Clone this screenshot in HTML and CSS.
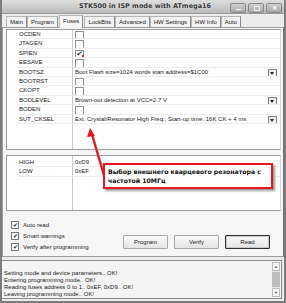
FILE: index.html
```html
<!DOCTYPE html>
<html lang="en">
  <head>
    <meta charset="UTF-8" />
    <title>STK500 in ISP mode with ATmega16</title>
    <link rel="stylesheet" href="styles.css">
  </head>
  <body>
    <div class="window">
      <!-- Title bar -->
      <div class="titlebar">
        <span class="title">STK500 in ISP mode with ATmega16</span>
        <div class="controls">
          <span class="ctl min"></span>
          <span class="ctl max"></span>
          <span class="ctl close">✕</span>
        </div>
      </div>

      <!-- Tabs -->
      <div class="tabs">
        <span class="tab first">Main</span>
        <span class="tab">Program</span>
        <span class="tab active">Fuses</span>
        <span class="tab">LockBits</span>
        <span class="tab">Advanced</span>
        <span class="tab">HW Settings</span>
        <span class="tab">HW Info</span>
        <span class="tab">Auto</span>
      </div>

      <div class="panel">
        <div class="list fuses">
          <div class="row"><span class="name">OCDEN</span><span class="val"><i class="box"></i></span></div>
          <div class="row"><span class="name">JTAGEN</span><span class="val"><i class="box"></i></span></div>
          <div class="row"><span class="name">SPIEN</span><span class="val"><i class="box checked"></i></span></div>
          <div class="row"><span class="name">EESAVE</span><span class="val"><i class="box"></i></span></div>
          <div class="row"><span class="name">BOOTSZ</span><span class="val combo">Boot Flash size=1024 words start address=$1C00<b class="drop"></b></span></div>
          <div class="row"><span class="name">BOOTRST</span><span class="val"><i class="box"></i></span></div>
          <div class="row"><span class="name">CKOPT</span><span class="val"><i class="box"></i></span></div>
          <div class="row"><span class="name">BODLEVEL</span><span class="val combo">Brown-out detection at VCC=2.7 V<b class="drop"></b></span></div>
          <div class="row"><span class="name">BODEN</span><span class="val"><i class="box"></i></span></div>
          <div class="row"><span class="name">SUT_CKSEL</span><span class="val combo">Ext. Crystal/Resonator High Freq.; Start-up time: 16K CK + 4 ms<b class="drop"></b></span></div>
        </div>

        <div class="list bytes">
          <div class="row"><span class="name">HIGH</span><span class="val">0xD9</span></div>
          <div class="row"><span class="name">LOW</span><span class="val">0xEF</span></div>
        </div>

        <div class="options">
          <div class="checks">
            <label class="opt"><i class="tick">✔</i>Auto read</label>
            <label class="opt"><i class="tick">✔</i>Smart warnings</label>
            <label class="opt"><i class="tick">✔</i>Verify after programming</label>
          </div>
          <div class="buttons">
            <button class="btn">Program</button>
            <button class="btn">Verify</button>
            <button class="btn default">Read</button>
          </div>
        </div>
      </div>

      <!-- Log -->
      <div class="log">
        <div class="log-text">
          <div>Setting mode and device parameters.. OK!</div>
          <div>Entering programming mode.. OK!</div>
          <div>Reading fuses address 0 to 1.. 0xEF, 0xD9.. OK!</div>
          <div>Leaving programming mode.. OK!</div>
        </div>
        <div class="scroll">
          <span class="arrow">▲</span>
          <span class="thumb"></span>
          <span class="arrow">▼</span>
        </div>
      </div>

      <!-- Callout over the lists -->
      <svg class="pointer" width="40" height="50" viewBox="0 0 40 50">
        <line x1="29" y1="49" x2="17" y2="8" stroke="#999" stroke-width="2" />
        <line x1="28" y1="48" x2="16" y2="7" stroke="#e8141c" stroke-width="2" />
        <polygon points="14,0 11,9 19,8" fill="#e8141c" />
      </svg>
      <div class="callout">Выбор внешнего кварцевого резонатора с частотой 10МГц</div>
    </div>
  </body>
</html>
```

FILE: styles.css
```css
body {
  margin: 0;
  font-family: "Liberation Sans", Arial, sans-serif;
  font-size: 6px;
  color: #222;
}

.window {
  width: 286px;
  height: 303px;
  box-sizing: border-box;
  position: relative;
  display: flex;
  flex-direction: column;
  background: #ececec;
  border: 2px solid #7c7c7c;
  border-top: none;
  overflow: hidden;
}

.titlebar {
  height: 13px;
  margin: 0 -2px;
  display: flex;
  align-items: center;
  justify-content: center;
  position: relative;
  background: linear-gradient(#dedede, #b9b9b9);
  border-bottom: 1px solid #9a9a9a;
}

.title {
  font-family: "DejaVu Sans", sans-serif;
  font-weight: bold;
  font-size: 6.5px;
  color: #333;
  text-shadow: 0 0 2px #fff;
  margin-left: 4px;
}

.controls {
  position: absolute;
  right: 4px;
  top: 3px;
  display: flex;
  gap: 2px;
}

.ctl {
  width: 14px;
  height: 8px;
  border: 1px solid #8a8a8a;
  border-radius: 2px;
  background: linear-gradient(#d0d0d0, #a8a8a8);
  position: relative;
  color: #fff;
  font-size: 6px;
  line-height: 8px;
  text-align: center;
  font-weight: bold;
}

.ctl.min::after {
  content: "";
  position: absolute;
  left: 5px;
  top: 5px;
  width: 5px;
  height: 1px;
  background: #fff;
}

.ctl.max::after {
  content: "";
  position: absolute;
  left: 5px;
  top: 2px;
  width: 4px;
  height: 3px;
  border: 1px solid #eee;
}

.tabs {
  display: flex;
  align-items: flex-end;
  height: 14px;
  padding-left: 4px;
}

.tab {
  height: 10px;
  line-height: 10px;
  padding: 0 3px;
  border: 1px solid #b5b5b5;
  border-bottom: none;
  border-right-color: #8a8a8a;
  background: #f2f2f2;
  white-space: nowrap;
}

.tab.active {
  height: 12px;
  background: #f6f6f6;
  margin: 0 1px -1px;
  position: relative;
}

.panel {
  flex: 0 0 auto;
  height: 227px;
  border: 1px solid #9c9c9c;
  border-right-color: #6e6e6e;
  background: #f6f6f6;
  padding: 1px 2px 0 3px;
  display: flex;
  flex-direction: column;
}

.list {
  background: #fff linear-gradient(#c8c8c8, #c8c8c8) no-repeat 65px 0 / 1px 100%;
  border: 1px solid #9d9d9d;
  border-right-color: #d8d8d8;
}

.fuses {
  height: 119px;
}

.bytes {
  height: 52px;
  margin-top: 5px;
  padding-top: 2px;
}

.row {
  display: grid;
  grid-template-columns: 11px 54px 1fr;
  height: 9.4px;
  line-height: 9px;
}

.row::before {
  content: "";
}

.row .name,
.row .val {
  border-bottom: 1px solid #ececec;
  white-space: nowrap;
  overflow: hidden;
}

.row .name {
  padding-left: 1px;
}

.row .val {
  padding-left: 2px;
  border-left: 1px solid #c8c8c8;
  position: relative;
}

.box {
  display: inline-block;
  width: 7px;
  height: 7px;
  margin-top: 1px;
  border: 1px solid #8f8f8f;
  background: #fff;
  vertical-align: top;
  position: relative;
}

.box.checked::after {
  content: "✔";
  position: absolute;
  left: 0;
  top: -2px;
  font-size: 7px;
  color: #111;
}

.box.checked::before {
  content: "";
  position: absolute;
  right: -1px;
  bottom: 0;
  width: 2px;
  height: 3px;
  background: #e0161e;
}

.drop {
  position: absolute;
  right: 3px;
  top: 1px;
  width: 7px;
  height: 6px;
  border: 1px solid #7d7d7d;
  background: #f2f2f2;
}

.drop::after {
  content: "";
  position: absolute;
  left: 1px;
  top: 2px;
  border: 2.5px solid transparent;
  border-top: 3px solid #222;
  border-bottom: none;
}

.options {
  flex: 1;
  display: flex;
  justify-content: space-between;
  align-items: flex-end;
  padding: 0 0 5px 5px;
}

.checks {
  display: flex;
  flex-direction: column;
  gap: 3px;
}

.opt {
  display: flex;
  align-items: center;
  gap: 4px;
  height: 8px;
}

.tick {
  width: 6px;
  height: 6px;
  border: 1px solid #777;
  background: #fff;
  font-style: normal;
  font-size: 6px;
  line-height: 6px;
  text-align: center;
  color: #111;
}

.buttons {
  display: flex;
  gap: 6px;
  padding-right: 11px;
  padding-bottom: 2px;
}

.btn {
  width: 45px;
  height: 14px;
  padding: 0;
  font-family: "Liberation Sans", Arial, sans-serif;
  font-size: 6px;
  color: #222;
  background: linear-gradient(#fafafa, #e4e4e4);
  border: 1px solid #a8a8a8;
  border-radius: 1px;
}

.btn.default {
  border: 1px solid #333;
  box-shadow: inset 0 0 0 1px #c8c8c8;
}

.log {
  flex: 1;
  margin: 3px 2px 2px -1px;
  display: flex;
  border: 1px solid #8a8a8a;
  background: #f4f4f4;
}

.log-text {
  flex: 1;
  padding: 9px 0 0 2px;
  line-height: 7px;
  white-space: nowrap;
}

.scroll {
  width: 8px;
  margin: 1px;
  display: flex;
  flex-direction: column;
  background: #e6e6e6;
}

.scroll .arrow {
  height: 7px;
  font-size: 4px;
  line-height: 7px;
  text-align: center;
  color: #555;
  border: 1px solid #bbb;
  background: #f4f4f4;
}

.scroll .thumb {
  flex: 1;
  margin: 1px 0;
  background: #bdbdbd;
}

.pointer {
  position: absolute;
  left: 74px;
  top: 128px;
}

.callout {
  position: absolute;
  left: 101px;
  top: 163px;
  width: 160px;
  padding: 2px 3px;
  background: #fff;
  border: 2px solid #e8141c;
  box-shadow: 2px 2px 2px #9a9a9a;
  font-family: "DejaVu Sans", sans-serif;
  font-weight: bold;
  font-size: 6.2px;
  line-height: 9px;
  color: #111;
}
```
